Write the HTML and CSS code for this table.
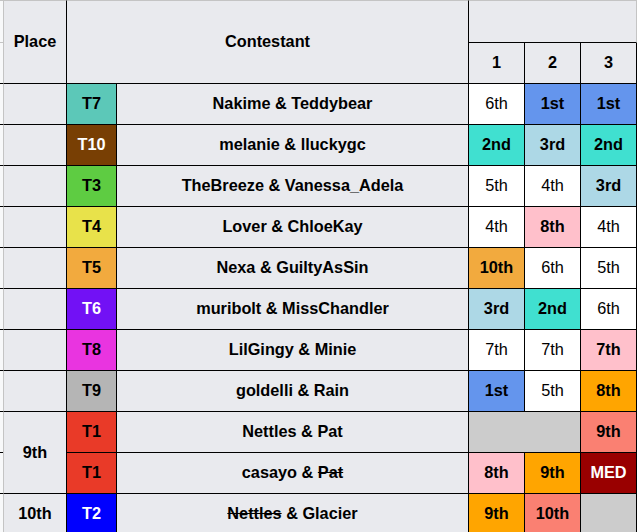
FILE: index.html
```html
<!DOCTYPE html>
<html>
<head>
<meta charset="utf-8">
<link rel="stylesheet" href="styles.css">
</head>
<body>
<div class="sheet">
  <div class="gut gut-h1"></div>
  <div class="hd place-h">Place</div>
  <div class="hd cont-h">Contestant</div>
  <div class="hd rounds-h"></div>
  <div class="gut gut-h2"></div>
  <div class="hd rn">1</div>
  <div class="hd rn">2</div>
  <div class="hd rn">3</div>

  <div class="gut"></div><div class="pl"></div><div class="tm t7">T7</div><div class="nm"><span>Nakime &amp; Teddybear</span></div>
  <div class="c w">6th</div><div class="c first">1st</div><div class="c first">1st</div>

  <div class="gut"></div><div class="pl"></div><div class="tm t10">T10</div><div class="nm"><span>melanie &amp; lluckygc</span></div>
  <div class="c second">2nd</div><div class="c third">3rd</div><div class="c second">2nd</div>

  <div class="gut"></div><div class="pl"></div><div class="tm t3">T3</div><div class="nm"><span>TheBreeze &amp; Vanessa_Adela</span></div>
  <div class="c w">5th</div><div class="c w">4th</div><div class="c third">3rd</div>

  <div class="gut"></div><div class="pl"></div><div class="tm t4">T4</div><div class="nm"><span>Lover &amp; ChloeKay</span></div>
  <div class="c w">4th</div><div class="c pink">8th</div><div class="c w">4th</div>

  <div class="gut"></div><div class="pl"></div><div class="tm t5">T5</div><div class="nm"><span>Nexa &amp; GuiltyAsSin</span></div>
  <div class="c sandy">10th</div><div class="c w">6th</div><div class="c w">5th</div>

  <div class="gut"></div><div class="pl"></div><div class="tm t6">T6</div><div class="nm"><span>muribolt &amp; MissChandler</span></div>
  <div class="c third">3rd</div><div class="c second">2nd</div><div class="c w">6th</div>

  <div class="gut"></div><div class="pl"></div><div class="tm t8">T8</div><div class="nm"><span>LilGingy &amp; Minie</span></div>
  <div class="c w">7th</div><div class="c w">7th</div><div class="c pink">7th</div>

  <div class="gut"></div><div class="pl"></div><div class="tm t9">T9</div><div class="nm"><span>goldelli &amp; Rain</span></div>
  <div class="c first">1st</div><div class="c w">5th</div><div class="c orange">8th</div>

  <div class="gut"></div><div class="pl pl-span">9th</div><div class="tm t1">T1</div><div class="nm"><span>Nettles &amp; Pat</span></div>
  <div class="c grey span2"></div><div class="c salmon">9th</div>

  <div class="gut"></div><div class="tm t1">T1</div><div class="nm"><span>casayo &amp; <s>Pat</s></span></div>
  <div class="c pink">8th</div><div class="c orange">9th</div><div class="c med">MED</div>

  <div class="gut"></div><div class="pl">10th</div><div class="tm t2">T2</div><div class="nm"><span><s>Nettles</s> &amp; Glacier</span></div>
  <div class="c orange">9th</div><div class="c salmon">10th</div><div class="c grey"></div>
</div>
</body>
</html>
```
FILE: styles.css
```css
html, body {
  margin: 0;
  padding: 0;
  background: #ffffff;
}
body {
  font-family: "Liberation Sans", Arial, sans-serif;
  font-size: 16.3px;
  color: #000;
  overflow: hidden;
}
.sheet {
  display: grid;
  grid-template-columns: 3px 64px 50px 352px 56px 56px 56px;
  grid-template-rows: 43px 41px repeat(11, 41px);
  width: 637px;
}
.sheet > div {
  box-sizing: border-box;
  display: flex;
  align-items: center;
  justify-content: center;
  padding-bottom: 1px;
  font-weight: bold;
  border-right: 1px solid #000;
  border-bottom: 1px solid #000;
  background: #e9eaee;
  white-space: nowrap;
}
.sheet > .gut {
  background: #f8f9fa;
  border-right: none;
}
.sheet > .gut-h1 {
  border-top: 1px solid #c4c4c4;
  border-bottom: 1px solid #c4c4c4;
}
.hd {
  border-top: 1px solid #c4c4c4;
}
.place-h {
  grid-row: span 2;
  border-left: 1px solid #c4c4c4;
}
.cont-h {
  grid-row: span 2;
  grid-column: span 2;
}
.rounds-h {
  grid-column: span 3;
}
.sheet > .rounds-h {
  border-right: 1px solid #c4c4c4;
}
.sheet > .rn {
  border-top: none;
}
.sheet > .pl {
  border-left: 1px solid #c4c4c4;
}
.pl-span {
  grid-row: span 2;
}
.span2 {
  grid-column: span 2;
}
.sheet > .w {
  background: #ffffff;
  font-weight: normal;
}
.sheet > .first { background: #6495ed; }
.sheet > .second { background: #40e0d0; }
.sheet > .third { background: #add8e6; }
.sheet > .pink { background: #ffc0cb; }
.sheet > .sandy { background: #f2aa3e; }
.sheet > .orange { background: #ffa500; }
.sheet > .salmon { background: #fa8072; }
.sheet > .grey { background: #cccccc; }
.sheet > .med { background: #990000; color: #ffffff; }

.sheet > .t7 { background: #5cc8b8; }
.sheet > .t10 { background: #783f04; color: #ffffff; }
.sheet > .t3 { background: #5ecc42; }
.sheet > .t4 { background: #e8e24a; }
.sheet > .t5 { background: #f2aa3e; }
.sheet > .t6 { background: #7211f5; color: #ffffff; }
.sheet > .t8 { background: #e934e0; }
.sheet > .t9 { background: #b5b5b5; }
.sheet > .t1 { background: #e93a28; }
.sheet > .t2 { background: #0000ff; color: #ffffff; }
```
